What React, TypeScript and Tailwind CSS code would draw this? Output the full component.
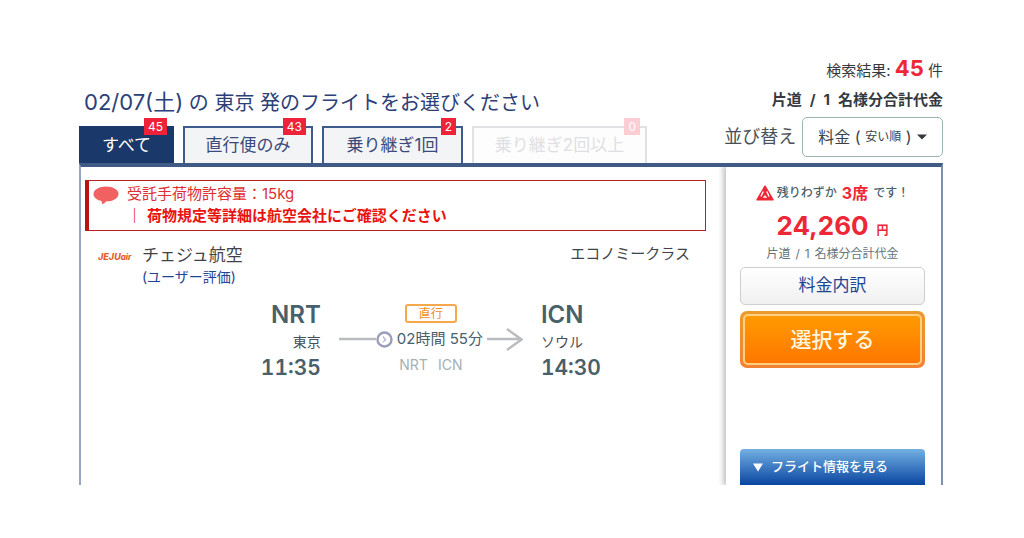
import React, { useState } from 'react';

interface Tab {
  id: string;
  label: string;
  count: number;
  width: string;
}

const TABS: Tab[] = [
  { id: 'all', label: 'すべて', count: 45, width: 'w-[95px]' },
  { id: 'direct', label: '直行便のみ', count: 43, width: 'w-[130px]' },
  { id: 'one', label: '乗り継ぎ1回', count: 2, width: 'w-[141px]' },
  { id: 'two', label: '乗り継ぎ2回以上', count: 0, width: 'w-[175px]' },
];

const TabButton: React.FC<{ tab: Tab; active: boolean; onClick: () => void }> = ({ tab, active, onClick }) => {
  const disabled = tab.count === 0;
  const look = active
    ? 'bg-[#1a3869] border-[#1a3869] text-white'
    : 'bg-[#f3f4f5] border-[#3f5a8c] text-[#3a4a7a]';

  return (
    <button
      onClick={onClick}
      disabled={disabled}
      className={`relative h-[37px] border-2 border-b-0 text-[17px] ${tab.width} ${disabled ? 'bg-[#fdfdfd] border-[#e0e2e6] text-[#dfe0e3]' : look}`}
    >
      {tab.label}
      <span
        className={`absolute -top-[10px] right-[5px] h-[17px] px-1 text-xs leading-[17px] text-white ${disabled ? 'bg-[#fccdd3]' : 'bg-[#ee2238]'}`}
      >
        {tab.count}
      </span>
    </button>
  );
};

const SortSelect: React.FC = () => {
  const [sort, setSort] = useState('安い順');

  return (
    <div className="flex items-center justify-end gap-[6px] mt-[5px]">
      <label htmlFor="sort" className="text-lg text-[#495057]">並び替え</label>
      <div className="relative flex items-center h-10 px-[15px] rounded-[5px] border border-[#9db3b5] text-[#3c4246]">
        <span className="text-base whitespace-pre">料金 ( </span>
        <span className="text-xs">{sort}</span>
        <span className="text-base whitespace-pre"> ) </span>
        <svg width="10" height="6" viewBox="0 0 10 6" className="ml-[1px]">
          <path d="M0 0.5h10L5 5.5z" fill="#343a40" />
        </svg>
        <select
          id="sort"
          value={sort}
          onChange={(e) => setSort(e.target.value)}
          className="absolute inset-0 w-full h-full opacity-0 cursor-pointer"
        >
          <option value="安い順">安い順</option>
          <option value="高い順">高い順</option>
        </select>
      </div>
    </div>
  );
};

const Notice: React.FC = () => (
  <div className="flex gap-2 h-[51px] pt-[2px] pl-[4px] border border-l-4 border-[#b9211f] border-l-[#b81414] text-[15px] leading-[22px] text-[#dd2f2f]">
    <svg width="26" height="19" viewBox="0 0 26 19" className="mt-[3px] shrink-0">
      <path d="M13 0.5C6 0.5 0.5 3.8 0.5 8c0 3.3 3.2 6 8 7l0.6 3.2c1.5-0.4 3-1.5 3.9-2.7C20 15.5 25.5 12.3 25.5 8S20 0.5 13 0.5z" fill="#f26161" />
    </svg>
    <div>
      <p>受託手荷物許容量：15kg</p>
      <p className="font-bold text-[#e8130f]"><span>｜</span><span className="ml-[5px]">荷物規定等詳細は航空会社にご確認ください</span></p>
    </div>
  </div>
);

const Route: React.FC = () => (
  <div className="grid grid-cols-[10fr_auto_7fr] gap-[18px] mt-[14px] text-[#47606a]">
    <div className="text-right">
      <p className="text-2xl leading-[28px] font-semibold">NRT</p>
      <p className="text-sm leading-[26px] text-[#495057]">東京</p>
      <p className="text-[21px] leading-[26px] font-semibold tabular-nums">11:35</p>
    </div>

    <div className="flex flex-col items-center">
      <span className="w-[52px] h-[19px] mt-[3px] rounded-[3px] border-2 border-[#f6a94a] text-xs leading-[15px] text-center text-[#f08c1c]">直行</span>
      <div className="flex items-center h-[33px]">
        <svg width="37" height="24" viewBox="0 0 37 24">
          <path d="M0 11h37" stroke="#b9bdbf" strokeWidth="2.5" />
        </svg>
        <svg width="17" height="17" viewBox="0 0 17 17">
          <circle cx="8.5" cy="8.5" r="7" fill="#fff" stroke="#9a9ebb" strokeWidth="2.4" />
          <path d="M7 5.5l2.5 3.5L7 11" fill="none" stroke="#b4b8cc" strokeWidth="1.3" />
        </svg>
        <span className="px-1 text-[15px] whitespace-nowrap">02時間 55分</span>
        <svg width="36" height="24" viewBox="0 0 36 24">
          <path d="M0 11h34M20 1l14.5 10.5L20 22" fill="none" stroke="#b9bdbf" strokeWidth="2.5" />
        </svg>
      </div>
      <p className="text-sm leading-[18px] text-[#a6b0b3] flex gap-[10px]">
        <span>NRT</span>
        <span>ICN</span>
      </p>
    </div>

    <div>
      <p className="text-2xl leading-[28px] font-semibold">ICN</p>
      <p className="text-sm leading-[26px] text-[#495057]">ソウル</p>
      <p className="text-[21px] leading-[26px] font-semibold tabular-nums">14:30</p>
    </div>
  </div>
);

const PricePanel: React.FC = () => (
  <aside className="relative flex flex-col w-[215px] shrink-0 pl-[14px] pr-4 pt-[13px] text-center bg-white shadow-[-2px_0_5px_1px_#c4c4c4]">
    <p className="flex items-center justify-center h-[26px] text-xs font-medium text-[#4c6068]">
      <svg width="18" height="16" viewBox="0 0 18 16" className="mr-[3px]">
        <path d="M9 1.2L17 14.800H1z" fill="#ee2737" stroke="#ee2737" strokeWidth="1.5" strokeLinejoin="round" />
        <path d="M7.200 6.500L5 11.500M10.800 6.500L13 11.500M7.500 12.800L9 11.300L10.500 12.800" fill="none" stroke="#fff" strokeWidth="1.4" />
      </svg>
      残りわずか
      <strong className="mx-[5px] text-base text-[#ee2737]">3席</strong>
      です！
    </p>
    <p className="mt-[2px] leading-[36px] text-[#ee2737] font-bold">
      <span className="text-[26px]">24,260</span>
      <span className="ml-2 text-xs">円</span>
    </p>
    <p className="flex justify-center gap-[5px] text-xs leading-[13px] text-[#64747a]">
      <span>片道</span>
      <span>/</span>
      <span>1</span>
      <span>名様分合計代金</span>
    </p>
    <button className="h-[38px] mt-[7px] rounded-[5px] border border-[#cfcfd2] bg-linear-to-b from-white to-[#f0f0f0] text-[17px] text-[#1f4593]">料金内訳</button>
    <button className="h-[57px] mt-[6px] p-[3px] rounded-[7px] bg-linear-to-b from-[#eb9a2c] to-[#f08234] text-[21px] font-medium text-[#fff6e0]">
      <span className="flex items-center justify-center h-full rounded-[5px] border-2 border-[#ffd080] bg-linear-to-b from-[#ff9a00] to-[#ff7600]">選択する</span>
    </button>
    <button className="flex items-center h-9 mt-auto pl-[13px] rounded-t-[4px] bg-linear-to-b from-[#73b0e2] to-[#0845a0] text-[13px] font-medium text-white">
      <svg width="10" height="9" viewBox="0 0 10 9" className="mr-2">
        <path d="M0 0.5h10L5 8.5z" fill="#fff" />
      </svg>
      フライト情報を見る
    </button>
  </aside>
);

const App: React.FC = () => {
  const [activeTab, setActiveTab] = useState('all');

  return (
    <main className="pt-[55px] pb-[54px] pl-[79px] pr-[81px] bg-white font-['Inter','Noto_Sans_CJK_JP',sans-serif]">
      <header className="flex items-end justify-between">
        <div>
          <h1 className="pl-[5px] mb-[9px] text-xl leading-[28px] text-[#2c4078]"><span className="text-[22px]">02/07(土)</span> の 東京 発のフライトをお選びください</h1>
          <nav className="flex gap-[9px]">
            {TABS.map((tab) => (
              <TabButton key={tab.id} tab={tab} active={tab.id === activeTab} onClick={() => setActiveTab(tab.id)} />
            ))}
          </nav>
        </div>
        <div className="pb-[6px] text-right text-[15px] text-[#343a40]">
          <p className="leading-[26px]">検索結果: <strong className="text-[22px] leading-[26px] text-[#ee2737]">45</strong> 件</p>
          <p className="flex justify-end gap-2 mt-1 leading-[24px] font-bold">
            <span>片道</span>
            <span>/</span>
            <span>1</span>
            <span>名様分合計代金</span>
          </p>
          <SortSelect />
        </div>
      </header>

      <div className="flex h-[322px] overflow-hidden border-t-4 border-x-2 border-t-[#3f5a85] border-l-[#97a5c4] border-r-[#7f92ab]">
        <section className="flex-1 pt-[13px] pl-1 pr-5">
          <Notice />
          <div className="flex justify-between pl-[13px] pr-4 mt-[12px]">
            <div className="flex gap-[6px]">
              <svg width="38" height="24" viewBox="0 0 38 24">
                <text x="0" y="17" fontSize="9" fontWeight="800" fontStyle="italic" fill="#e0602a">JEJU<tspan fontSize="8">air</tspan></text>
              </svg>
              <div>
                <p className="text-[17px] leading-[24px] text-[#404448]">チェジュ航空</p>
                <a href="#reviews" className="block text-sm leading-[20px] text-[#1f4593]">(ユーザー評価)</a>
              </div>
            </div>
            <p className="text-[15px] leading-[22px] text-[#404448]">エコノミークラス</p>
          </div>
          <Route />
        </section>
        <PricePanel />
      </div>
    </main>
  );
};

export default App;
